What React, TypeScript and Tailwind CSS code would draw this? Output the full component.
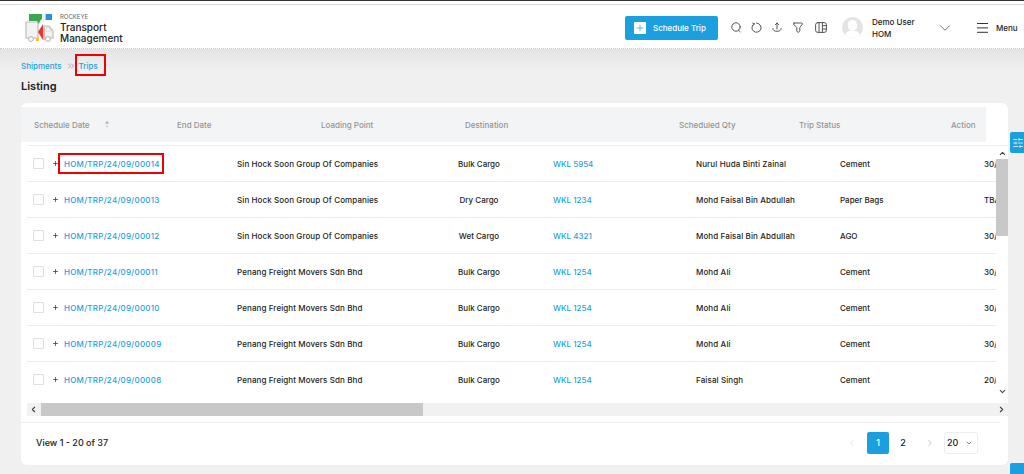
import React from "react";
import { ChevronDown, ChevronUp, ChevronLeft, ChevronRight, Plus, ChevronsRight, SlidersHorizontal } from "lucide-react";

const rows = [
  ["HOM/TRP/24/09/00014", "Sin Hock Soon Group Of Companies", "Bulk Cargo", "WKL 5954", "Nurul Huda Binti Zainal", "Cement", "30/09"],
  ["HOM/TRP/24/09/00013", "Sin Hock Soon Group Of Companies", "Dry Cargo", "WKL 1234", "Mohd Faisal Bin Abdullah", "Paper Bags", "TBA"],
  ["HOM/TRP/24/09/00012", "Sin Hock Soon Group Of Companies", "Wet Cargo", "WKL 4321", "Mohd Faisal Bin Abdullah", "AGO", "30/09"],
  ["HOM/TRP/24/09/00011", "Penang Freight Movers Sdn Bhd", "Bulk Cargo", "WKL 1254", "Mohd Ali", "Cement", "30/09"],
  ["HOM/TRP/24/09/00010", "Penang Freight Movers Sdn Bhd", "Bulk Cargo", "WKL 1254", "Mohd Ali", "Cement", "30/09"],
  ["HOM/TRP/24/09/00009", "Penang Freight Movers Sdn Bhd", "Bulk Cargo", "WKL 1254", "Mohd Ali", "Cement", "30/09"],
  ["HOM/TRP/24/09/00008", "Penang Freight Movers Sdn Bhd", "Bulk Cargo", "WKL 1254", "Faisal Singh", "Cement", "20/09"],
];

function Logo() {
  return (
    <svg width="29" height="29" viewBox="0 0 29 29" className="shrink-0">
      <path d="M1 9h12v16H1z" fill="#f3f3f3" stroke="#bdbdbd" strokeWidth="1.2" />
      <path d="M19 13h5l4 5v7h-9z" fill="#f3f3f3" stroke="#bdbdbd" strokeWidth="1.2" />
      <path d="M21 15h3l2 3h-5z" fill="#fff" stroke="#c8c8c8" strokeWidth="0.7" />
      <circle cx="6" cy="26" r="2.4" fill="#fff" stroke="#b0b0b0" />
      <circle cx="23" cy="26" r="2.4" fill="#fff" stroke="#b0b0b0" />
      <path d="M4 1h13v5l-2 2-1 3-2-3H4z" fill="#3aa84c" />
      <path d="M17 1h3v6l-2 3-1-3z" fill="#efefef" />
      <path d="M20 1h2v6h-2z" fill="#a9cdee" />
      <path d="M21 1h6v6h-6z" fill="#2a8fe0" />
      <path d="M18 11v16l-5-8z" fill="#e23a33" />
      <path d="M18 13l2 3v11h-2z" fill="#f3b3ae" />
      <path d="M11 25h3v3h-3z" fill="#f2c230" />
    </svg>
  );
}

const ic = { fill: "none", stroke: "#555", strokeWidth: 1, strokeLinecap: "round" as const, strokeLinejoin: "round" as const };

function Cols({ children }: { children: React.ReactNode }) {
  return <div className="flex items-center h-full w-max whitespace-nowrap">{children}</div>;
}

export default function App() {
  return (
    <div className="w-[1024px] h-[474px] overflow-hidden relative bg-[#f0f0f0] text-[#222] font-['Inter','Liberation_Sans',sans-serif]">
      <div className="h-[1px] bg-[#333]" />
      <div className="h-[3px] bg-white" />
      <div className="h-[1px] bg-[#d9d9d9]" />
      <header className="h-[44px] bg-white border-b border-dotted border-[#c9c9c9] flex items-center pt-[2px]">
        <div className="flex items-center ml-[25px] w-[600px] gap-[6px] shrink-0">
          <Logo />
          <div className="flex flex-col pt-[1px]">
            <span className="text-[6px] leading-[8px] text-[#666]">ROCKEYE</span>
            <span className="text-[10px] leading-[11px] font-medium text-[#222] mt-[1px]">Transport</span>
            <span className="text-[10px] leading-[11px] font-medium text-[#222]">Management</span>
          </div>
        </div>
        <button className="w-[93px] h-[24px] shrink-0 bg-[#1c9fdf] rounded-[2px] flex items-center pl-[9px] gap-[7px] text-white text-[8px] font-medium">
          <span className="w-[12px] h-[12px] bg-white rounded-[1px] flex items-center justify-center"><Plus size={10} strokeWidth={1.5} className="text-[#1c9fdf]" /></span>
          Schedule Trip
        </button>
        <svg width="10" height="11" viewBox="0 0 10 11" className="ml-[13px] shrink-0" {...ic}>
          <circle cx="5" cy="5" r="4.2" /><path d="M7.6 8.2l1.6 1.6" />
        </svg>
        <svg width="11" height="11" viewBox="0 0 11 11" className="ml-[10px] shrink-0" {...ic}>
          <path d="M3.2 1.6a4.6 4.6 0 1 0 2.3-.6" /><path d="M1.8 1.2l1.4.4-.4 1.4" />
        </svg>
        <svg width="10" height="11" viewBox="0 0 10 11" className="ml-[10px] shrink-0" {...ic}>
          <path d="M5 7V1M3.4 2.6L5 1l1.6 1.6M.8 6.5c0 1.7 1.6 2.8 4.2 2.8s4.2-1.1 4.2-2.8" />
        </svg>
        <svg width="10" height="11" viewBox="0 0 10 11" className="ml-[11px] shrink-0" {...ic}>
          <path d="M1.2 1h7.6c.6 0 .9.6.6 1.1L6.8 5.6v3.2c0 .8-.7 1.4-1.6 1.4-.8 0-1.4-.6-1.4-1.4V5.6L.6 2.1C.3 1.6.6 1 1.2 1z" />
        </svg>
        <svg width="12" height="11" viewBox="0 0 12 11" className="ml-[12px] shrink-0" {...ic}>
          <rect x="0.6" y="0.6" width="10.8" height="9.8" rx="2.2" /><path d="M4 .6v9.8M7.4 .6v9.8M7.4 3.6h4M7.4 7h4" />
        </svg>
        <div className="w-[21px] h-[21px] rounded-full bg-[#e4e4e4] ml-[15px] relative overflow-hidden shrink-0">
          <div className="absolute left-[6px] top-[3px] w-[9px] h-[11px] rounded-full bg-white" />
          <div className="absolute left-[3px] top-[14px] w-[15px] h-[10px] rounded-full bg-white" />
        </div>
        <div className="ml-[9px] w-[64px] shrink-0 text-[8px] leading-[12px] font-medium text-[#222]">
          <div>Demo User</div>
          <div>HOM</div>
        </div>
        <ChevronDown size={18} strokeWidth={1} className="text-[#444] shrink-0" />
        <svg width="11" height="10" viewBox="0 0 11 10" className="ml-[23px] shrink-0" fill="none" stroke="#333" strokeWidth="1">
          <path d="M0 .5h11M0 4.9h11M0 9.3h11" />
        </svg>
        <span className="ml-[8px] text-[8px] font-medium">Menu</span>
      </header>
      <div className="absolute left-0 right-0 top-[49px] h-[22px] bg-gradient-to-b from-[#e4e4e4] to-[#f0f0f0]" />
      <main className="relative px-[21px]">
        <nav className="pt-[10px] h-[24px] flex items-center text-[8px] text-[#1c9fdf] font-medium">
          <span>Shipments</span>
          <ChevronsRight size={10} strokeWidth={2} className="text-[#999] ml-[4px] mr-[3px]" />
          <span className="relative">Trips
            <span className="absolute left-[-4px] top-[-6px] w-[31px] h-[22px] border-2 border-[#f00000]" />
          </span>
        </nav>
        <h1 className="mt-[5px] text-[11px] leading-[16px] font-semibold text-[#222]">Listing</h1>
        <section className="mt-[9px] w-[987px] h-[362px] bg-white rounded-[6px] flex flex-col overflow-hidden">
          <div className="mt-[4px] w-[965px] h-[35px] bg-[#f3f4f6] shrink-0 text-[8px] font-medium text-[#949494] overflow-hidden">
            <Cols>
              <span className="ml-[13px] w-[70px]">Schedule Date</span>
              <span className="w-[73px]">
                <svg width="6" height="9" viewBox="0 0 6 9" className="fill-[#a5a5a5]"><path d="M3 1l2 2.4H1z" /><path d="M3 8l2-2.4H1z" className="fill-[#dadada]" /></svg>
              </span>
              <span className="w-[144px]">End Date</span>
              <span className="w-[144px]">Loading Point</span>
              <span className="w-[214px]">Destination</span>
              <span className="w-[120px]">Scheduled Qty</span>
              <span className="w-[152px]">Trip Status</span>
              <span>Action</span>
            </Cols>
          </div>
          <div className="ml-[6px] mt-[3px] flex h-[251px] shrink-0 border-t border-[#eceef2]">
            <div className="w-[969px] overflow-hidden">
              {rows.map((r) => (
                <div key={r[0]} className="h-[36px] border-b border-[#e9ebf0] text-[8px] font-medium">
                  <Cols>
                    <span className="ml-[6px] w-[11px] h-[11px] border border-[#dcdfe6] rounded-[1px] bg-white" />
                    <Plus size={7} strokeWidth={2.5} className="ml-[8px] text-[#333]" />
                    <span className="ml-[5px] w-[173px] text-[#1c9fdf] tracking-[0.25px] relative">
                      {r[0]}
                      {r[0].endsWith("14") && <span className="absolute left-[-6px] top-[-5px] w-[106px] h-[21px] border-2 border-[#f00000]" />}
                    </span>
                    <span className="w-[221px] tracking-[0.1px]">{r[1]}</span>
                    <span className="w-[95px]"><span className="inline-block w-[42px] text-center">{r[2]}</span></span>
                    <span className="w-[143px] text-[#1c9fdf]">{r[3]}</span>
                    <span className="w-[144px] tracking-[0.12px]">{r[4]}</span>
                    <span className="w-[144px]">{r[5]}</span>
                    <span>{r[6]}</span>
                  </Cols>
                </div>
              ))}
            </div>
            <div className="w-[12px] bg-white flex flex-col items-center">
              <ChevronUp size={9} strokeWidth={3} className="text-[#444] mt-[3px] mb-[1px]" />
              <div className="w-[12px] h-[77px] bg-[#c8c8c8]" />
              <div className="flex-1" />
              <ChevronDown size={9} strokeWidth={3} className="text-[#444]" />
            </div>
          </div>
          <div className="ml-[6px] w-[981px] h-[13px] mt-[7px] shrink-0 bg-[#f1f1f1] flex items-center justify-between">
            <ChevronLeft size={9} strokeWidth={3} className="ml-[2px] text-[#444]" />
            <div className="flex-1 h-full ml-[3px] flex">
              <div className="w-[382px] h-full bg-[#c8c8c8]" />
            </div>
            <ChevronRight size={9} strokeWidth={3} className="mr-[2px] text-[#444]" />
          </div>
          <div className="h-[1px] w-[979px] mt-[6px] shrink-0 bg-[#eceef4]" />
          <footer className="flex-1 flex items-center pl-[15px] pb-[3px]">
            <span className="text-[9px] font-medium text-[#222] w-[811px]">View 1 - 20 of 37</span>
            <ChevronLeft size={10} strokeWidth={1.2} className="text-[#ccc]" />
            <span className="ml-[10px] w-[22px] h-[22px] rounded-[2px] bg-[#1c9fdf] text-white text-[9px] font-medium flex items-center justify-center">1</span>
            <span className="w-[28px] text-center text-[9px] font-medium">2</span>
            <ChevronRight size={10} strokeWidth={1.2} className="ml-[8px] text-[#7d8796]" />
            <span className="ml-[9px] w-[34px] h-[22px] border border-[#eceef2] rounded-[3px] flex items-center justify-between pl-[2px] pr-[4px] text-[9px] font-medium">
              20 <ChevronDown size={8} strokeWidth={2} className="text-[#444]" />
            </span>
          </footer>
        </section>
      </main>
      <div className="absolute left-[1010px] top-[132px] w-[14px] h-[21px] bg-[#1c9fdf] rounded-l-[2px] flex items-center pl-[2px] text-white">
        <SlidersHorizontal size={12} strokeWidth={1.5} />
      </div>
      <div className="absolute left-[1010px] top-[463px] w-[14px] h-[11px] bg-[#1c9fdf] rounded-tl-[2px]" />
    </div>
  );
}
